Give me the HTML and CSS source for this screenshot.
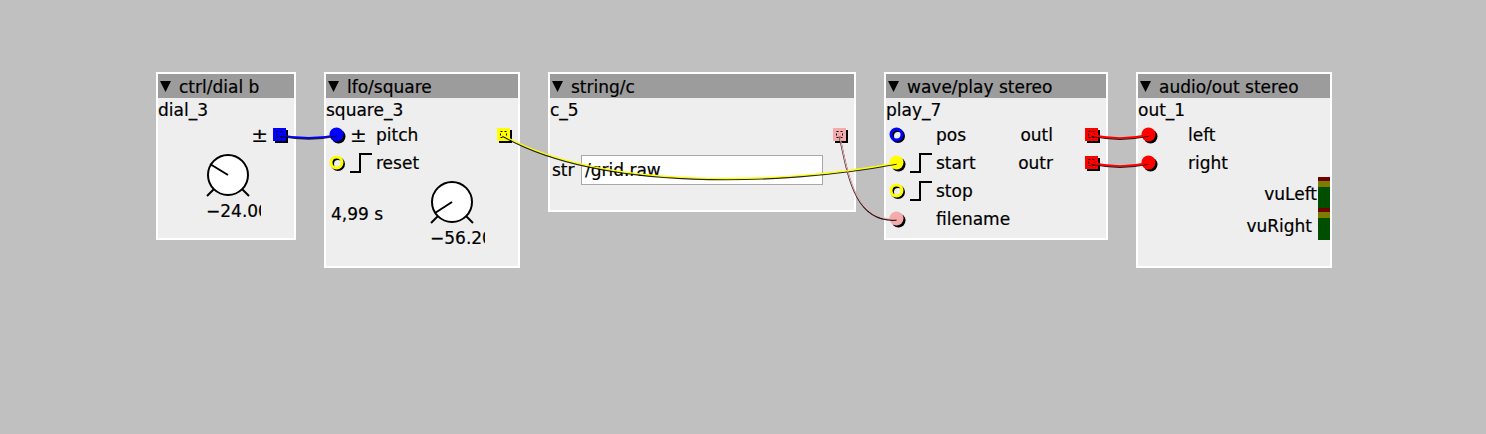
FILE: index.html
```html
<!DOCTYPE html>
<html>
<head>
<meta charset="utf-8">
<link rel="stylesheet" href="styles.css">
</head>
<body>
<div class="canvas">

  <div class="obj o1">
    <div class="hdr"><svg class="tri" width="11" height="11" viewBox="0 0 11 11"><polygon points="0,0 11,0 5.5,11" fill="#000"/></svg>ctrl/dial b</div>
    <div class="inst">dial_3</div>
    <div class="row">
      <span class="lbl"></span>
      <span class="pm pm-r">±</span>
      <svg class="outlet" width="16" height="16" viewBox="0 0 16 16"><rect x="2" y="2" width="13" height="13" fill="#000"/><rect x="0" y="0" width="13" height="13" fill="#0000ff"/><rect x="3.5" y="3.5" width="6" height="6" fill="none" stroke="#000" stroke-dasharray="2 2"/></svg>
    </div>
    <div class="dial dial1">
      <svg width="50" height="46" viewBox="0 0 50 46"><circle cx="25" cy="22" r="20" fill="#fff" stroke="#000" stroke-width="2"/><line x1="11" y1="36" x2="4" y2="43" stroke="#000" stroke-width="2"/><line x1="39" y1="36" x2="46" y2="43" stroke="#000" stroke-width="2"/><line x1="25" y1="22" x2="7" y2="11" stroke="#000" stroke-width="2"/></svg>
      <div class="val">−24.00</div>
    </div>
  </div>

  <div class="obj o2">
    <div class="hdr"><svg class="tri" width="11" height="11" viewBox="0 0 11 11"><polygon points="0,0 11,0 5.5,11" fill="#000"/></svg>lfo/square</div>
    <div class="inst">square_3</div>
    <div class="row">
      <span class="in"><svg width="18" height="18" viewBox="0 0 18 18"><circle cx="9.5" cy="9.5" r="7" fill="#000"/><circle cx="7.5" cy="7.5" r="7" fill="#0000ff"/></svg></span>
      <span class="ico"><span class="pm">±</span></span>
      <span class="lbl">pitch</span>
      <svg class="outlet" width="16" height="16" viewBox="0 0 16 16"><rect x="2" y="2" width="13" height="13" fill="#000"/><rect x="0" y="0" width="13" height="13" fill="#ffff00"/><rect x="3.5" y="3.5" width="6" height="6" fill="none" stroke="#000" stroke-dasharray="2 2"/></svg>
    </div>
    <div class="row">
      <span class="in"><svg width="18" height="18" viewBox="0 0 18 18"><circle cx="9" cy="9" r="5.5" fill="none" stroke="#000" stroke-width="3"/><circle cx="7.5" cy="7.5" r="5.5" fill="none" stroke="#ffff00" stroke-width="3"/></svg></span>
      <span class="ico"><svg class="step" width="24" height="22" viewBox="0 0 24 22"><polyline points="0,20 10,20 10,2 22,2" fill="none" stroke="#000" stroke-width="2"/></svg></span>
      <span class="lbl">reset</span>
    </div>
    <div class="dialrow">
      <span class="time">4,99 s</span>
      <div class="dial">
        <svg width="50" height="46" viewBox="0 0 50 46"><circle cx="25" cy="22" r="20" fill="#fff" stroke="#000" stroke-width="2"/><line x1="11" y1="36" x2="4" y2="43" stroke="#000" stroke-width="2"/><line x1="39" y1="36" x2="46" y2="43" stroke="#000" stroke-width="2"/><line x1="25" y1="22" x2="8" y2="33" stroke="#000" stroke-width="2"/></svg>
        <div class="val">−56.20</div>
      </div>
    </div>
  </div>

  <div class="obj o3">
    <div class="hdr"><svg class="tri" width="11" height="11" viewBox="0 0 11 11"><polygon points="0,0 11,0 5.5,11" fill="#000"/></svg>string/c</div>
    <div class="inst">c_5</div>
    <div class="row">
      <span class="lbl"></span>
      <svg class="outlet" width="16" height="16" viewBox="0 0 16 16"><rect x="2" y="2" width="13" height="13" fill="#000"/><rect x="0" y="0" width="13" height="13" fill="#f4abab"/><rect x="3.5" y="3.5" width="6" height="6" fill="none" stroke="#000" stroke-dasharray="2 2"/></svg>
    </div>
    <div class="strrow">
      <span class="strlbl">str</span>
      <span class="field">/grid.raw</span>
    </div>
  </div>

  <div class="obj o4">
    <div class="hdr"><svg class="tri" width="11" height="11" viewBox="0 0 11 11"><polygon points="0,0 11,0 5.5,11" fill="#000"/></svg>wave/play stereo</div>
    <div class="inst">play_7</div>
    <div class="row">
      <span class="in"><svg width="18" height="18" viewBox="0 0 18 18"><circle cx="9" cy="9" r="5.5" fill="none" stroke="#000" stroke-width="3"/><circle cx="7.5" cy="7.5" r="5.5" fill="none" stroke="#0000ff" stroke-width="3"/></svg></span>
      <span class="ico"></span>
      <span class="lbl">pos</span>
      <span class="rlbl">outl</span>
      <svg class="outlet" width="16" height="16" viewBox="0 0 16 16"><rect x="2" y="2" width="13" height="13" fill="#000"/><rect x="0" y="0" width="13" height="13" fill="#ff0000"/><rect x="3.5" y="3.5" width="6" height="6" fill="none" stroke="#000" stroke-dasharray="2 2"/></svg>
    </div>
    <div class="row">
      <span class="in"><svg width="18" height="18" viewBox="0 0 18 18"><circle cx="9.5" cy="9.5" r="7" fill="#000"/><circle cx="7.5" cy="7.5" r="7" fill="#ffff00"/></svg></span>
      <span class="ico"><svg class="step" width="24" height="22" viewBox="0 0 24 22"><polyline points="0,20 10,20 10,2 22,2" fill="none" stroke="#000" stroke-width="2"/></svg></span>
      <span class="lbl">start</span>
      <span class="rlbl">outr</span>
      <svg class="outlet" width="16" height="16" viewBox="0 0 16 16"><rect x="2" y="2" width="13" height="13" fill="#000"/><rect x="0" y="0" width="13" height="13" fill="#ff0000"/><rect x="3.5" y="3.5" width="6" height="6" fill="none" stroke="#000" stroke-dasharray="2 2"/></svg>
    </div>
    <div class="row">
      <span class="in"><svg width="18" height="18" viewBox="0 0 18 18"><circle cx="9" cy="9" r="5.5" fill="none" stroke="#000" stroke-width="3"/><circle cx="7.5" cy="7.5" r="5.5" fill="none" stroke="#ffff00" stroke-width="3"/></svg></span>
      <span class="ico"><svg class="step" width="24" height="22" viewBox="0 0 24 22"><polyline points="0,20 10,20 10,2 22,2" fill="none" stroke="#000" stroke-width="2"/></svg></span>
      <span class="lbl">stop</span>
    </div>
    <div class="row">
      <span class="in"><svg width="18" height="18" viewBox="0 0 18 18"><circle cx="9.5" cy="9.5" r="7" fill="#000"/><circle cx="7.5" cy="7.5" r="7" fill="#f4abab"/></svg></span>
      <span class="ico"></span>
      <span class="lbl">filename</span>
    </div>
  </div>

  <div class="obj o5">
    <div class="hdr"><svg class="tri" width="11" height="11" viewBox="0 0 11 11"><polygon points="0,0 11,0 5.5,11" fill="#000"/></svg>audio/out stereo</div>
    <div class="inst">out_1</div>
    <div class="row">
      <span class="in"><svg width="18" height="18" viewBox="0 0 18 18"><circle cx="9.5" cy="9.5" r="7" fill="#000"/><circle cx="7.5" cy="7.5" r="7" fill="#ff0000"/></svg></span>
      <span class="ico"></span>
      <span class="lbl">left</span>
    </div>
    <div class="row">
      <span class="in"><svg width="18" height="18" viewBox="0 0 18 18"><circle cx="9.5" cy="9.5" r="7" fill="#000"/><circle cx="7.5" cy="7.5" r="7" fill="#ff0000"/></svg></span>
      <span class="ico"></span>
      <span class="lbl">right</span>
    </div>
    <div class="vurow vu1">
      <span class="vulbl">vuLeft</span>
      <span class="meter"><span class="m-red"></span><span class="m-ol"></span><span class="m-gr"></span></span>
    </div>
    <div class="vurow vu2">
      <span class="vulbl">vuRight</span>
      <span class="meter"><span class="m-red"></span><span class="m-ol"></span><span class="m-gr"></span></span>
    </div>
  </div>

  <svg class="wires" width="1486" height="434" viewBox="0 0 1486 434">
    <g class="shadow" transform="translate(0,1)">
      <path d="M279.5,135 C300,139 318,139 336.5,135"/>
      <path d="M502.5,135 C600,190 780,185 896.5,163"/>
      <path d="M839.5,135 C848,175 855,222 896.5,219"/>
      <path d="M1091.5,135 C1110,139 1130,139 1148.5,135"/>
      <path d="M1091.5,163 C1110,167 1130,167 1148.5,163"/>
    </g>
    <path class="w-blue" d="M279.5,135 C300,139 318,139 336.5,135"/>
    <path class="w-yel" d="M502.5,135 C600,190 780,185 896.5,163"/>
    <path class="w-pink" d="M839.5,135 C848,175 855,222 896.5,219"/>
    <path class="w-red" d="M1091.5,135 C1110,139 1130,139 1148.5,135"/>
    <path class="w-red" d="M1091.5,163 C1110,167 1130,167 1148.5,163"/>
  </svg>
</div>
</body>
</html>
```

FILE: styles.css
```css
body {
  margin: 0;
  background: #c0c0c0;
  font-family: "DejaVu Sans", sans-serif;
  font-size: 17px;
  color: #000;
  -webkit-text-stroke: 0.2px #000;
}

.canvas {
  position: relative;
  width: 1486px;
  height: 434px;
  overflow: hidden;
}

.obj {
  position: absolute;
  top: 72px;
  box-sizing: border-box;
  border: 2px solid #fff;
  background: #eeeeee;
  display: flex;
  flex-direction: column;
  white-space: nowrap;
}

.o1 { left: 156px; width: 140px; height: 168px; }
.o2 { left: 324px; width: 196px; height: 196px; }
.o3 { left: 548px; width: 308px; height: 140px; }
.o4 { left: 884px; width: 224px; height: 168px; }
.o5 { left: 1136px; width: 196px; height: 196px; }

.hdr {
  height: 24px;
  box-sizing: border-box;
  padding-top: 2px;
  line-height: 26px;
  background: #9c9c9c;
  padding-left: 2px;
  display: flex;
  align-items: center;
}

.tri {
  flex: none;
  margin-right: 8px;
  margin-bottom: 2px;
}

.inst {
  height: 23px;
  line-height: 24px;
}

.row {
  height: 28px;
  display: flex;
  align-items: center;
}

.in {
  width: 22px;
  flex: none;
  display: flex;
  align-items: center;
}

.in svg {
  margin-left: 3px;
  margin-top: 2px;
}

.ico {
  width: 28px;
  flex: none;
  box-sizing: border-box;
  padding-left: 2px;
  display: flex;
  align-items: center;
}

.step {
  margin-top: -1px;
}

.pm {
  font-size: 20px;
  line-height: 20px;
}

.pm-r {
  margin-right: 5px;
}

.lbl {
  flex: 1;
  line-height: 29px;
}

.rlbl {
  margin-right: 32px;
  line-height: 29px;
}

.outlet {
  flex: none;
  margin-right: 5px;
  margin-top: 1px;
}

.dial {
  display: flex;
  flex-direction: column;
}

.dial1 {
  margin-left: 45px;
  margin-top: 4px;
}

.val {
  width: 55px;
  margin-left: 3px;
  margin-top: 1px;
  overflow: hidden;
  height: 20px;
  line-height: 22px;
}

.dialrow {
  display: flex;
  align-items: flex-start;
  margin-top: 3px;
}

.time {
  width: 96px;
  margin-left: 5px;
  margin-top: 24px;
}

.strrow {
  display: flex;
  align-items: center;
  margin-top: 6px;
  height: 30px;
}

.strlbl {
  width: 31px;
  box-sizing: border-box;
  padding-left: 2px;
  line-height: 32px;
}

.field {
  width: 242px;
  height: 30px;
  box-sizing: border-box;
  border: 1px solid #a8a8a8;
  background: #fff;
  padding-left: 3px;
  line-height: 28px;
}

.vurow {
  display: flex;
  justify-content: flex-end;
  align-items: stretch;
}

.vu1 { height: 31px; }
.vu2 { height: 32px; }

.vulbl {
  align-self: center;
  margin-top: 3px;
}

.vu1 .vulbl { margin-right: 1px; }
.vu2 .vulbl { margin-right: 6px; }

.meter {
  width: 12px;
  display: flex;
  flex-direction: column;
}

.m-red { height: 4px; background: #700000; }
.m-ol { height: 6px; background: #7c7c00; }
.m-gr { flex: 1; background: #004f00; }

.wires {
  position: absolute;
  left: 0;
  top: 0;
  pointer-events: none;
}

.wires path {
  fill: none;
}

.shadow path {
  stroke: #000;
  stroke-width: 1.6;
  stroke-opacity: 0.85;
}

.w-blue { stroke: #0000ff; stroke-width: 1.6; }
.w-yel { stroke: #ffff00; stroke-width: 1.4; }
.w-pink { stroke: #f4abab; stroke-width: 1.1; }
.w-red { stroke: #ff0000; stroke-width: 1.8; }
```
